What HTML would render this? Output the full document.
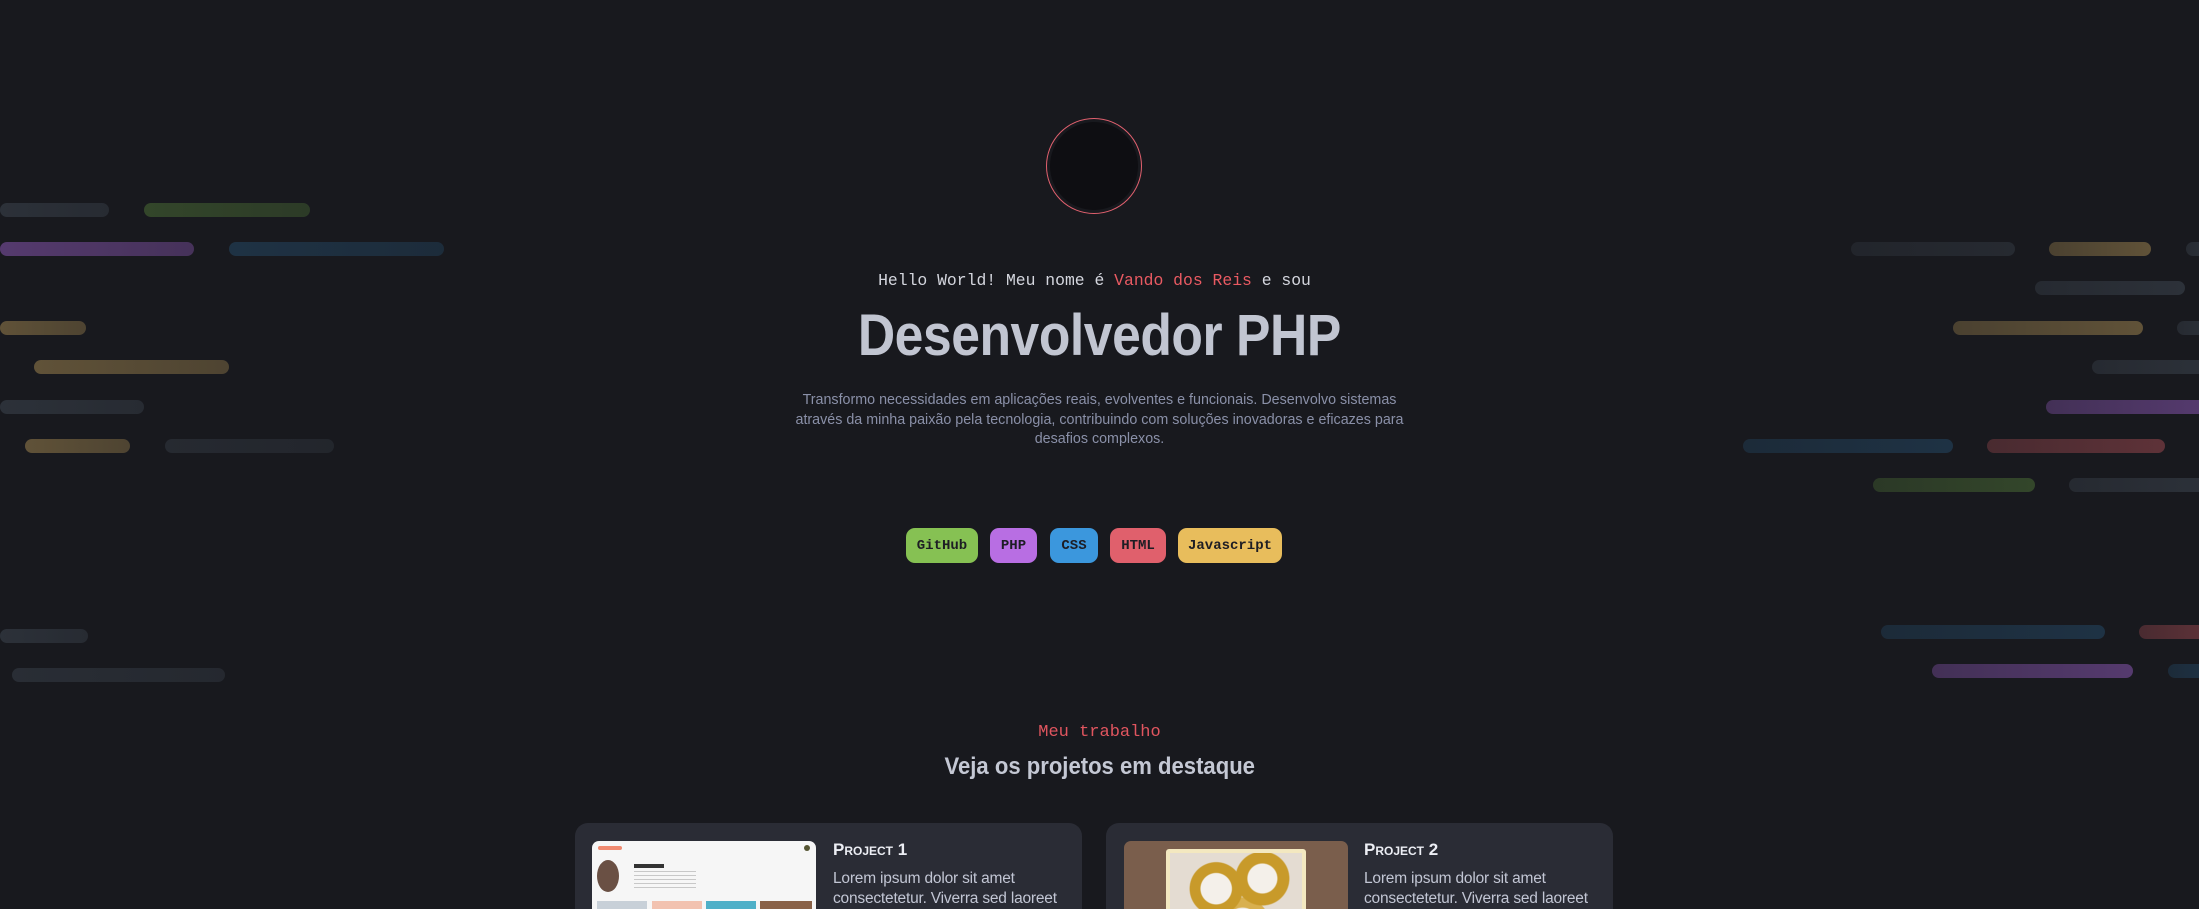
<!DOCTYPE html>
<html style="overflow:hidden;width:2199px;height:909px"><head><meta charset="utf-8"><style>
*{margin:0;padding:0;box-sizing:border-box}
body{width:2199px;height:909px;overflow:hidden;background:#18191e;position:relative;font-family:"Liberation Sans",sans-serif}
.b{position:absolute;height:14px;border-radius:7px}
.g{--c:#2c3139}.gr{--c:#33462a}.pu{--c:#553a6e}.bl{--c:#1e3244}.ye{--c:#605238}.re{--c:#5e3238}
.L{background:linear-gradient(90deg,var(--c),color-mix(in srgb,var(--c) 75%,#18191e))}
.R{background:linear-gradient(90deg,color-mix(in srgb,var(--c) 70%,#18191e),var(--c))}
.c{position:absolute;left:0;width:2199px;text-align:center}
.mono{font-family:"Liberation Mono",monospace}
.badge{position:absolute;top:528px;height:35px;border-radius:9px;font:bold 14px "Liberation Mono",monospace;color:#1d1d24;display:flex;align-items:center;justify-content:center}
.card{position:absolute;top:823px;width:507px;height:86px;background:#2a2c35;border-radius:13px 13px 0 0;overflow:hidden}
.ttl{position:absolute;left:258px;top:17px;color:#eceef4;font-weight:bold;font-size:17px;font-variant:small-caps}
.lor{position:absolute;left:258px;top:46px;color:#c2c6d4;font-size:15.5px;line-height:20px;white-space:nowrap;letter-spacing:-.2px}
</style></head><body>
<div class="b L g" style="left:0;top:203px;width:109px"></div>
<div class="b L gr" style="left:144px;top:203px;width:166px"></div>
<div class="b L pu" style="left:0;top:242px;width:194px"></div>
<div class="b L bl" style="left:229px;top:242px;width:215px"></div>
<div class="b L ye" style="left:0;top:321px;width:86px"></div>
<div class="b L ye" style="left:34px;top:360px;width:195px"></div>
<div class="b L g" style="left:0;top:400px;width:144px"></div>
<div class="b L ye" style="left:25px;top:439px;width:105px"></div>
<div class="b L g" style="left:165px;top:439px;width:169px;opacity:.7"></div>
<div class="b L g" style="left:0;top:629px;width:88px"></div>
<div class="b L g" style="left:12px;top:668px;width:213px;opacity:.85"></div>
<div class="b R g" style="left:1851px;top:242px;width:164px;opacity:.7"></div>
<div class="b R ye" style="left:2049px;top:242px;width:102px"></div>
<div class="b R g" style="left:2186px;top:242px;width:20px"></div>
<div class="b R g" style="left:2035px;top:281px;width:150px"></div>
<div class="b R ye" style="left:1953px;top:321px;width:190px"></div>
<div class="b R g" style="left:2177px;top:321px;width:30px"></div>
<div class="b R g" style="left:2092px;top:360px;width:115px"></div>
<div class="b R pu" style="left:2046px;top:400px;width:160px"></div>
<div class="b R bl" style="left:1743px;top:439px;width:210px"></div>
<div class="b R re" style="left:1987px;top:439px;width:178px"></div>
<div class="b R gr" style="left:1873px;top:478px;width:162px"></div>
<div class="b R g" style="left:2069px;top:478px;width:140px"></div>
<div class="b R bl" style="left:1881px;top:625px;width:224px"></div>
<div class="b R re" style="left:2139px;top:625px;width:70px"></div>
<div class="b R pu" style="left:1932px;top:664px;width:201px"></div>
<div class="b R bl" style="left:2168px;top:664px;width:40px"></div>

<div style="position:absolute;left:1046px;top:118px;width:96px;height:96px;border-radius:50%;border:1.5px solid #e0606e;padding:3px"><div style="width:100%;height:100%;border-radius:50%;background:#0e0e12"></div></div>

<div class="c mono" style="top:271px;font-size:16.4px;color:#d4d6de;padding-right:10px">Hello World! Meu nome é <span style="color:#e95a62">Vando dos Reis</span> e sou</div>
<div class="c" style="top:302px"><span style="display:inline-block;font-weight:bold;font-size:58px;color:#c1c5d1;transform:scaleX(.89);letter-spacing:-.5px">Desenvolvedor PHP</span></div>
<div class="c" style="top:391px;font-size:14.3px;line-height:19.5px;color:#8a90a8;letter-spacing:0">Transformo necessidades em aplicações reais, evolventes e funcionais. Desenvolvo sistemas<br>através da minha paixão pela tecnologia, contribuindo com soluções inovadoras e eficazes para<br>desafios complexos.</div>

<div class="badge" style="left:906px;width:72px;background:#86c153">GitHub</div>
<div class="badge" style="left:990px;width:47px;background:#b86ee3">PHP</div>
<div class="badge" style="left:1050px;width:48px;background:#3b97dd">CSS</div>
<div class="badge" style="left:1110px;width:56px;background:#e0606c">HTML</div>
<div class="badge" style="left:1178px;width:104px;background:#e8bd5c">Javascript</div>

<div class="c mono" style="top:723px;font-size:17px;color:#e0555f">Meu trabalho</div>
<div class="c" style="top:753px"><span style="display:inline-block;font-weight:bold;font-size:24px;color:#c4c8d4;transform:scaleX(.92)">Veja os projetos em destaque</span></div>

<div class="card" style="left:575px">
  <div style="position:absolute;left:17px;top:18px;width:224px;height:110px;border-radius:7px;background:#f6f6f6;overflow:hidden">
    <div style="position:absolute;left:6px;top:5px;width:24px;height:4px;background:#f08a70;border-radius:2px"></div>
    <div style="position:absolute;right:6px;top:4px;width:6px;height:6px;border-radius:50%;background:#553"></div>
    <div style="position:absolute;left:5px;top:19px;width:22px;height:32px;border-radius:50%;background:#6a5044"></div>
    <div style="position:absolute;left:42px;top:23px;width:30px;height:4px;background:#333"></div>
    <div style="position:absolute;left:42px;top:30px;width:62px;height:20px;background:repeating-linear-gradient(#c8c8c8 0 1px,transparent 1px 4px)"></div>
    <div style="position:absolute;left:5px;top:60px;width:50px;height:60px;background:#c8d0d8"></div>
    <div style="position:absolute;left:60px;top:60px;width:50px;height:60px;background:#f2c2b0"></div>
    <div style="position:absolute;left:114px;top:60px;width:50px;height:60px;background:#4fb0c8"></div>
    <div style="position:absolute;left:168px;top:60px;width:52px;height:60px;background:#8a6248"></div>
  </div>
  <div class="ttl">Project 1</div>
  <div class="lor">Lorem ipsum dolor sit amet<br>consectetetur. Viverra sed laoreet</div>
</div>
<div class="card" style="left:1106px">
  <div style="position:absolute;left:18px;top:18px;width:224px;height:110px;border-radius:7px;background:#7a5e4c;overflow:hidden">
    <div style="position:absolute;left:42px;top:8px;width:140px;height:110px;background:#f3e8c0;border-radius:3px;padding:4px"><div style="width:100%;height:100%;background:radial-gradient(circle at 35% 35%,#f4f0ea 0 14%,#c89a2a 15% 24%,transparent 25%),radial-gradient(circle at 70% 25%,#f4f0ea 0 12%,#c89a2a 13% 22%,transparent 23%),radial-gradient(circle at 55% 70%,#f0ece6 0 16%,#d8b050 17% 26%,transparent 27%),#e4dcd2"></div></div>
  </div>
  <div class="ttl">Project 2</div>
  <div class="lor">Lorem ipsum dolor sit amet<br>consectetetur. Viverra sed laoreet</div>
</div>
</body></html>
